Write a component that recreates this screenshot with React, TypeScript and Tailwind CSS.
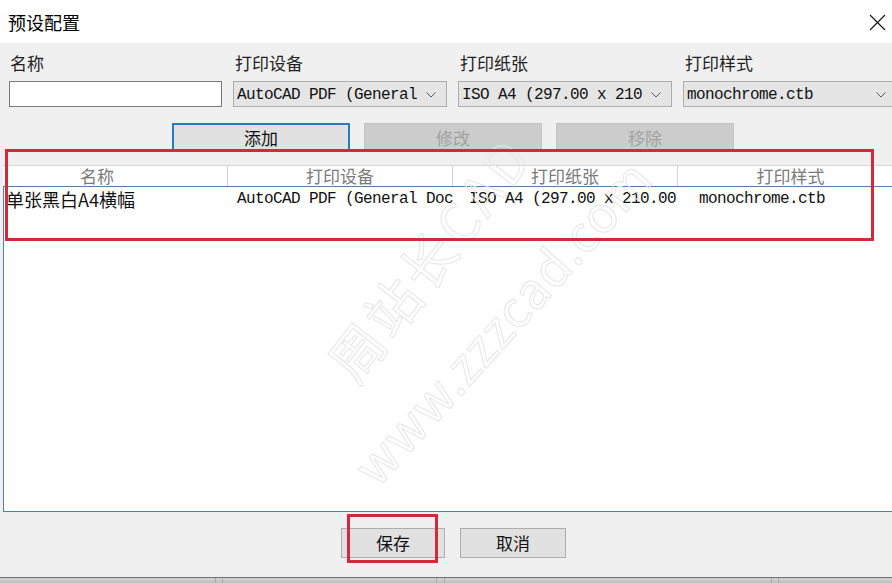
import React from "react";

const mono = "font-['Liberation_Mono','Noto_Sans_CJK_SC',monospace] text-[16px] tracking-[-0.6px]";
const cjk = "font-['Noto_Sans_CJK_SC',sans-serif]";

function Chevron() {
  return (
    <svg width="10" height="6" viewBox="0 0 10 6" className="shrink-0">
      <path d="M0.5 0.5 L5 5 L9.5 0.5" fill="none" stroke="#5a5a5a" strokeWidth="1" />
    </svg>
  );
}

function Combo({ text }: { text: string }) {
  return (
    <div
      className={`h-[26px] w-[214px] shrink-0 border border-[#adadad] bg-[#e5e5e5] flex items-center pl-[3px] pr-[10px] pt-[2px] ${mono} text-[#111] whitespace-nowrap`}
    >
      <span className="flex-1 overflow-hidden">{text}</span>
      <Chevron />
    </div>
  );
}

export default function App() {
  return (
    <div className={`relative w-[892px] h-[583px] overflow-hidden flex flex-col bg-white ${cjk}`}>
      {/* Title bar */}
      <div className="h-[43px] shrink-0 bg-white flex items-center justify-between pl-[8px] pr-[5px]">
        <span className="text-[18px] text-black leading-none">预设配置</span>
        <svg width="17" height="17" viewBox="0 0 17 17" className="mr-[1px] mt-[1px]">
          <path d="M1 1 L16 16 M16 1 L1 16" stroke="#111" strokeWidth="1.1" fill="none" />
        </svg>
      </div>

      {/* Body */}
      <div className="flex-1 bg-[#f0f0f0] flex flex-col">
        {/* Labels */}
        <div className="flex pt-[10px] pl-[10px] text-[17px] leading-[20px] text-[#222]">
          <span className="w-[225px] shrink-0">名称</span>
          <span className="w-[225px] shrink-0">打印设备</span>
          <span className="w-[225px] shrink-0">打印纸张</span>
          <span className="w-[225px] shrink-0">打印样式</span>
        </div>

        {/* Inputs */}
        <div className="flex mt-[8px] pl-[9px] gap-[11px]">
          <div className="h-[26px] w-[213px] shrink-0 bg-white border border-[#7a7a7a]" />
          <Combo text="AutoCAD PDF (General" />
          <Combo text="ISO A4 (297.00 x 210" />
          <Combo text="monochrome.ctb" />
        </div>

        {/* Buttons */}
        <div className="flex mt-[16px] pl-[172px] gap-[14px] text-[17px]">
          <div className="h-[29px] w-[178px] shrink-0 border-2 border-[#2a7bc6] bg-[#e1e1e1] flex items-center justify-center text-[#111]">
            添加
          </div>
          <div className="h-[29px] w-[178px] shrink-0 border border-[#c4c4c4] bg-[#cccccc] flex items-center justify-center text-[#a2a2a2]">
            修改
          </div>
          <div className="h-[29px] w-[178px] shrink-0 border border-[#c4c4c4] bg-[#cccccc] flex items-center justify-center text-[#a2a2a2]">
            移除
          </div>
        </div>

        {/* Table header */}
        <div className="mt-[13px] ml-[3px] h-[21px] bg-white border-t border-[#d6d6d6] flex text-[17px] leading-[19px] text-[#7a7a7a] whitespace-nowrap">
          <div className="w-[225px] shrink-0 border-r border-[#d2d2d2] flex justify-center pr-[36px]">名称</div>
          <div className="w-[225px] shrink-0 border-r border-[#d2d2d2] flex justify-center">打印设备</div>
          <div className="w-[225px] shrink-0 border-r border-[#d2d2d2] flex justify-center">打印纸张</div>
          <div className="w-[225px] shrink-0 flex justify-center">打印样式</div>
        </div>

        {/* List body */}
        <div className="ml-[3px] h-[326px] bg-white border-l border-t border-b border-[#4d82a6] flex flex-col">
          <div className="flex h-[21px] mt-[1px] items-center whitespace-nowrap text-[#111]">
            <div className="w-[225px] shrink-0 pl-[2px] text-[18px] leading-none">单张黑白A4横幅</div>
            <div className={`w-[225px] shrink-0 pl-[8px] overflow-hidden ${mono}`}>AutoCAD PDF (General Doc</div>
            <div className={`w-[225px] shrink-0 pl-[15px] overflow-hidden ${mono}`}>ISO A4 (297.00 x 210.00</div>
            <div className={`w-[225px] shrink-0 pl-[20px] overflow-hidden ${mono}`}>monochrome.ctb</div>
          </div>
        </div>

        {/* Bottom buttons */}
        <div className="flex mt-[16px] pl-[341px] gap-[15px] text-[17px] text-[#111]">
          <div className="h-[30px] w-[104px] shrink-0 border border-[#adadad] bg-[#e1e1e1] flex items-center justify-center">
            保存
          </div>
          <div className="h-[30px] w-[106px] shrink-0 border border-[#adadad] bg-[#e1e1e1] flex items-center justify-center">
            取消
          </div>
        </div>
        <div className="flex-1" />
      </div>

      {/* Bottom strip */}
      <div className="h-[6px] shrink-0 border-t border-[#6e6e6e] bg-gradient-to-b from-[#d4d4d4] to-[#bdbdbd] flex">
        <div className="w-[216px] shrink-0 border-r border-[#aaaaaa]" />
        <div className="w-[7px] shrink-0 border-r border-[#aaaaaa]" />
        <div className="w-[214px] shrink-0 border-r border-[#aaaaaa]" />
        <div className="w-[8px] shrink-0 border-r border-[#aaaaaa]" />
        <div className="w-[327px] shrink-0 border-r border-[#aaaaaa]" />
        <div className="w-[7px] shrink-0 border-r border-[#aaaaaa]" />
      </div>

      {/* Watermark */}
      <div className="pointer-events-none absolute left-[428px] top-[258px] -translate-x-1/2 -translate-y-1/2 rotate-[-52deg] whitespace-nowrap text-[54px] leading-none text-transparent [-webkit-text-stroke:1px_#e6e6e6] tracking-[4px]">
        周站长CAD
      </div>
      <div className="pointer-events-none absolute left-[500px] top-[320px] -translate-x-1/2 -translate-y-1/2 rotate-[-48deg] whitespace-nowrap text-[50px] leading-none text-transparent [-webkit-text-stroke:1px_#e6e6e6] tracking-[1px]">
        www.zzzcad.com
      </div>

      {/* Red annotations */}
      <div className="pointer-events-none absolute left-[5px] top-[149px] w-[869px] h-[92px] border-[3px] border-[#d12b3b]" />
      <div className="pointer-events-none absolute left-[347px] top-[514px] w-[91px] h-[49px] border-[3px] border-[#d12b3b]" />
    </div>
  );
}
